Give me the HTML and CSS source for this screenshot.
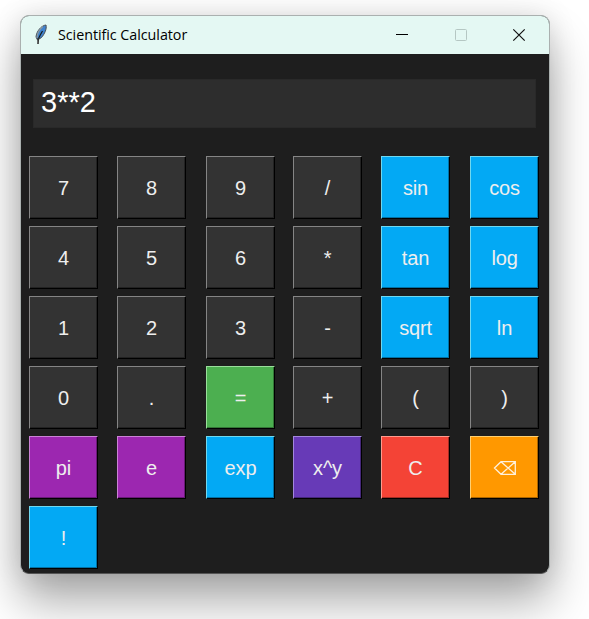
FILE: index.html
```html
<!DOCTYPE html>
<html lang="en">
<head>
<meta charset="utf-8">
<title>Scientific Calculator</title>
<link rel="stylesheet" href="styles.css">
</head>
<body>
<main class="window">
  <header class="titlebar">
    <svg class="feather" width="14" height="21" viewBox="0 0 14 21">
      <path d="M12 1C7.500 1.500 2.500 7 2 13l1.500 3L7.500 13.500C10.500 10 13 5 12 1Z" fill="#3f83cf" stroke="#4a4e52" stroke-width="1"/>
      <path d="M9 2.500C5 5.500 3.200 9.500 3 14" fill="none" stroke="#8d999f" stroke-width="1.200"/>
      <path d="M8.500 7L6.500 10.500L4.300 15" fill="none" stroke="#15191d" stroke-width="1.200"/>
      <path d="M4.300 14L4 20" fill="none" stroke="#333" stroke-width="1.600"/>
    </svg>
    <span class="title">Scientific Calculator</span>
    <div class="controls">
      <svg width="14" height="14" viewBox="0 0 14 14"><path d="M1 6.500H13" stroke="#000"/></svg>
      <svg width="14" height="14" viewBox="0 0 14 14"><rect x="1.500" y="1.500" width="11" height="11" rx="1" fill="none" stroke="#b5c7c3"/></svg>
      <svg width="14" height="14" viewBox="0 0 14 14"><path d="M1.300 1.300L12.700 12.700M12.700 1.300L1.300 12.700" stroke="#111" stroke-width="1.200"/></svg>
    </div>
  </header>
  <div class="display">3**2</div>
  <div class="keys">
    <button class="key">7</button><button class="key">8</button><button class="key">9</button><button class="key">/</button><button class="key blue">sin</button><button class="key blue">cos</button>
    <button class="key">4</button><button class="key">5</button><button class="key">6</button><button class="key">*</button><button class="key blue">tan</button><button class="key blue">log</button>
    <button class="key">1</button><button class="key">2</button><button class="key">3</button><button class="key">-</button><button class="key blue">sqrt</button><button class="key blue">ln</button>
    <button class="key">0</button><button class="key">.</button><button class="key green">=</button><button class="key">+</button><button class="key">(</button><button class="key">)</button>
    <button class="key purple">pi</button><button class="key purple">e</button><button class="key blue">exp</button><button class="key violet">x^y</button><button class="key red">C</button><button class="key orange" aria-label="Backspace"><svg width="24" height="16" viewBox="0 0 24 16"><path d="M1.500 8L8 1.700H22.300V14.300H8ZM8 1.700L22.300 14.300M22.300 1.700L8 14.300" fill="none" stroke="#fff0db" stroke-width="1.300"/></svg></button>
    <button class="key blue">!</button>
  </div>
</main>
</body>
</html>
```
FILE: styles.css
```css
* { box-sizing: border-box; }
body {
  margin: 0;
  width: 589px;
  height: 619px;
  padding: 15px 0 0 20px;
  overflow: hidden;
  background: #fff;
}
.window {
  width: 530px;
  height: 559px;
  border: 1px solid #aab0af;
  border-bottom-color: #555;
  border-radius: 9px;
  overflow: hidden;
  background: #1e1e1e;
  box-shadow: 0 28px 46px rgba(0, 0, 0, .33), 0 0 28px rgba(0, 0, 0, .12);
}
.titlebar {
  display: flex;
  align-items: center;
  height: 38px;
  padding: 0 23px 0 13px;
  background: #e4f8f3;
}
.feather { margin-top: -2px; }
.title {
  margin: -1px 0 0 10px;
  font: 14.300px "Open Sans", "Noto Sans", sans-serif;
  letter-spacing: -.04px;
  white-space: nowrap;
  color: #000;
}
.controls {
  display: flex;
  gap: 44.500px;
  margin-left: auto;
}
.display {
  width: 503px;
  height: 49px;
  margin: 25px 0 0 12px;
  padding-left: 7px;
  border: 1px solid #292929;
  background: #2d2d2d;
  color: #fff;
  font: 29px/45px "Liberation Sans", Arial, sans-serif;
}
.keys {
  display: grid;
  grid-template-columns: 88px 89px 87px 88px 89px 69px;
  grid-auto-rows: 63px;
  row-gap: 7px;
  margin: 28px 0 0 8px;
}
.key {
  --face: #333;
  --light: #858585;
  --shade: #222;
  display: flex;
  align-items: center;
  justify-content: center;
  width: 69px;
  margin: 0;
  padding: 1px 0 0;
  border: 1px solid #000;
  border-top-color: var(--light);
  border-left-color: var(--light);
  background: var(--face);
  box-shadow: inset -1px -1px var(--shade);
  color: #eee;
  font: 20px "Liberation Sans", Arial, sans-serif;
  letter-spacing: -.15px;
}
.blue { --face: #03a9f4; --light: #70d8ef; --shade: #0271a4; }
.green { --face: #4caf50; --light: #9adf9b; --shade: #337636; }
.purple { --face: #9c27b0; --light: #cb82d6; --shade: #681a76; }
.violet { --face: #673ab7; --light: #a387dd; --shade: #45277a; }
.red { --face: #f44336; --light: #ff9b8e; --shade: #a32d24; }
.orange { --face: #ff9800; --light: #ffd071; --shade: #aa6500; }
```
